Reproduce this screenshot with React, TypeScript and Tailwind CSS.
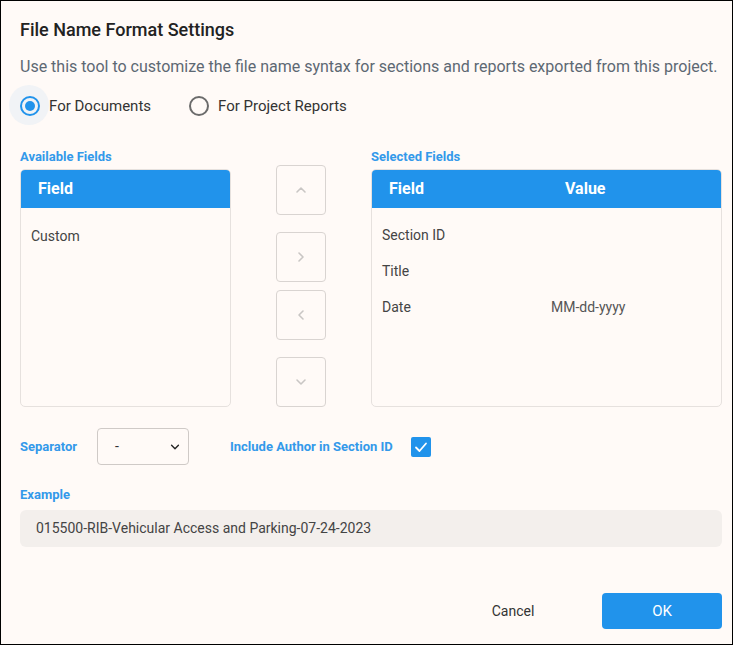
import { useState } from "react";

const Chevron = ({ dir, className }: { dir: "up" | "down" | "left" | "right"; className?: string }) => {
  const d = {
    up: "M3 9 L7 5 L11 9",
    down: "M3 5 L7 9 L11 5",
    left: "M9 3 L5 7 L9 11",
    right: "M5 3 L9 7 L5 11",
  }[dir];
  return (
    <svg viewBox="0 0 14 14" className={className} fill="none" stroke="currentColor" strokeWidth="1.6" strokeLinecap="round" strokeLinejoin="round">
      <path d={d} />
    </svg>
  );
};

const MoveButton = ({ dir, className }: { dir: "up" | "down" | "left" | "right"; className?: string }) => (
  <button className={`w-[50px] h-[50px] rounded-[4px] border border-[#d9d4d1] flex items-center justify-center text-[#c9c6c4] ${className ?? ""}`}>
    <Chevron dir={dir} className="w-[14px] h-[14px]" />
  </button>
);

const selected = [
  { field: "Section ID", value: "" },
  { field: "Title", value: "" },
  { field: "Date", value: "MM-dd-yyyy" },
];

export default function App() {
  const [mode, setMode] = useState<"docs" | "reports">("docs");

  return (
    <div className="w-[733px] h-[645px] border border-black bg-[#fffaf7] font-['Roboto',sans-serif] flex flex-col pl-[19px] pr-[10px] pt-[17px] pb-[15px]">
      <h1 className="text-[18px] leading-[24px] font-medium text-[#222]">File Name Format Settings</h1>
      <p className="mt-[13px] text-[16px] leading-[24px] text-[#5d6873]">
        Use this tool to customize the file name syntax for sections and reports exported from this project.
      </p>

      <div className="mt-[7px] flex items-center h-[40px] gap-[38px]">
        <button className="relative flex items-center gap-[9px]" onClick={() => setMode("docs")}>
          <span className="absolute left-[-11px] top-[-10px] w-[40px] h-[40px] rounded-full bg-[#f1f3f6]" />
          <span className={`relative w-[20px] h-[20px] rounded-full border-2 flex items-center justify-center ${mode === "docs" ? "border-[#2193eb]" : "border-[#6b6b6b]"}`}>
            {mode === "docs" && <span className="w-[10px] h-[10px] rounded-full bg-[#2193eb]" />}
          </span>
          <span className="relative text-[15px] text-[#333]">For Documents</span>
        </button>
        <button className="relative flex items-center gap-[9px]" onClick={() => setMode("reports")}>
          <span className={`w-[20px] h-[20px] rounded-full border-2 flex items-center justify-center ${mode === "reports" ? "border-[#2193eb]" : "border-[#6b6b6b]"}`}>
            {mode === "reports" && <span className="w-[10px] h-[10px] rounded-full bg-[#2193eb]" />}
          </span>
          <span className="text-[15px] text-[#333]">For Project Reports</span>
        </button>
      </div>

      <div className="mt-[23px] flex items-end">
        <div className="w-[211px] flex flex-col">
          <div className="text-[13px] leading-[16px] font-bold text-[#3399ea]">Available Fields</div>
          <div className="mt-[4px] h-[238px] rounded-[5px] border border-[#e6e1de] overflow-hidden flex flex-col">
            <div className="h-[38px] bg-[#2193eb] px-[17px] flex items-center text-white font-bold text-[16px]">Field</div>
            <div className="pt-[18px] px-[10px] text-[14px] text-[#444]">Custom</div>
          </div>
        </div>

        <div className="ml-[45px] w-[50px] flex flex-col">
          <MoveButton dir="up" />
          <MoveButton dir="right" className="mt-[17px]" />
          <MoveButton dir="left" className="mt-[8px]" />
          <MoveButton dir="down" className="mt-[17px]" />
        </div>

        <div className="ml-[45px] flex-1 flex flex-col">
          <div className="text-[13px] leading-[16px] font-bold text-[#3399ea]">Selected Fields</div>
          <div className="mt-[4px] h-[238px] rounded-[5px] border border-[#e6e1de] overflow-hidden flex flex-col">
            <div className="h-[38px] bg-[#2193eb] flex items-center text-white font-bold text-[16px]">
              <span className="pl-[17px] w-[193px]">Field</span>
              <span>Value</span>
            </div>
            <div className="pt-[9px] flex flex-col">
              {selected.map((r) => (
                <div key={r.field} className="h-[36px] flex items-center text-[14px] text-[#444]">
                  <span className="pl-[10px] w-[179px]">{r.field}</span>
                  <span className="text-[#555]">{r.value}</span>
                </div>
              ))}
            </div>
          </div>
        </div>
      </div>

      <div className="mt-[21px] flex items-center h-[37px]">
        <span className="w-[77px] text-[13px] font-bold text-[#3399ea]">Separator</span>
        <div className="w-[92px] h-[37px] rounded-[4px] border border-[#cfcac7] flex items-center justify-between pl-[17px] pr-[7px] text-[14px] text-[#333]">
          <span>-</span>
          <Chevron dir="down" className="w-[12px] h-[12px] text-[#222]" />
        </div>
        <span className="ml-[41px] w-[181px] text-[13px] font-bold text-[#3399ea]">Include Author in Section ID</span>
        <span className="w-[20px] h-[20px] rounded-[2px] bg-[#2193eb] flex items-center justify-center">
          <svg viewBox="0 0 16 16" className="w-[16px] h-[16px]" fill="none" stroke="white" strokeWidth="1.8" strokeLinecap="round" strokeLinejoin="round">
            <path d="M3 8.5 L6.5 12 L13 4.5" />
          </svg>
        </span>
      </div>

      <div className="mt-[22px] text-[13px] leading-[16px] font-bold text-[#3399ea]">Example</div>
      <div className="mt-[7px] h-[37px] rounded-[6px] bg-[#f3efec] flex items-center px-[16px] text-[14px] text-[#444]">
        015500-RIB-Vehicular Access and Parking-07-24-2023
      </div>

      <div className="mt-auto flex items-center justify-end">
        <button className="w-[110px] h-[36px] mr-[34px] text-[14px] text-[#333]">Cancel</button>
        <button className="w-[120px] h-[36px] rounded-[4px] bg-[#2193eb] text-white text-[15px]">OK</button>
      </div>
    </div>
  );
}
